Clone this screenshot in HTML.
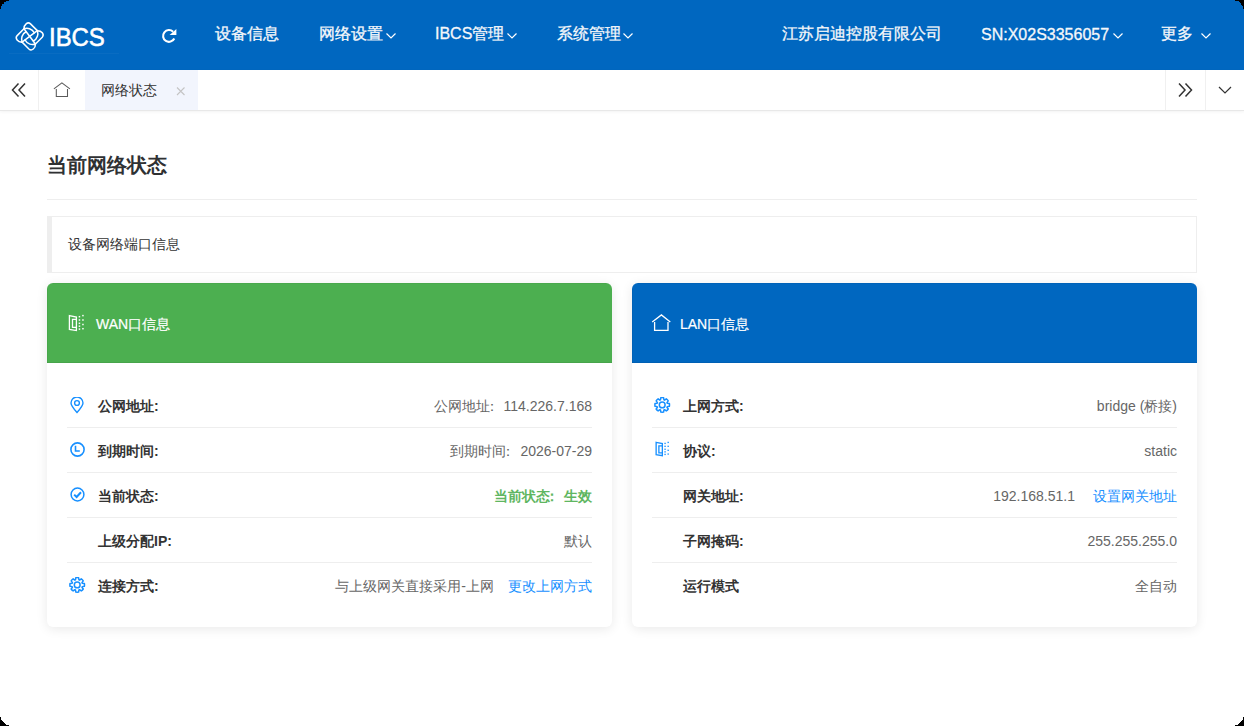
<!DOCTYPE html>
<html><head><meta charset="utf-8">
<style>
*{box-sizing:border-box;margin:0;padding:0}
html,body{width:1244px;height:726px;overflow:hidden;background:#000}
body{font-family:"Liberation Sans",sans-serif;color:#333}
#app{position:absolute;left:0;top:0;width:1244px;height:726px;background:#fff;overflow:hidden}
.abs{position:absolute;white-space:nowrap}
#hdr{position:absolute;left:0;top:0;width:1244px;height:70px;background:#0067c0;color:#fff}
.nav{font-size:16px;line-height:20px;color:#f5f7fa;-webkit-text-stroke:0.3px #f5f7fa}
.chev{position:absolute;width:10px;height:6px}
#tabs{position:absolute;left:0;top:70px;width:1244px;height:41px;background:#fff;border-bottom:1px solid #e8e8e8;box-shadow:0 1px 3px rgba(0,0,0,.05)}
.tdiv{position:absolute;top:0;width:1px;height:40px;background:#f0f0f0}
.title{font-size:20px;line-height:24px;font-weight:bold;color:#2f3133}
.hr{position:absolute;left:47px;top:199px;width:1150px;height:1px;background:#eee}
.info{position:absolute;left:47px;top:216px;width:1150px;height:57px;border:1px solid #eee;border-left:5px solid #eee;background:#fff}
.card{position:absolute;top:283px;width:565px;height:344px;background:#fff;border-radius:6px;overflow:hidden;box-shadow:0 2px 12px rgba(0,0,0,.09)}
.chd{position:absolute;left:0;top:0;width:565px;height:80px;box-shadow:inset 1px 1px 0 rgba(0,0,0,.04),inset 0 -1px 0 rgba(0,0,0,.06)}
.ctitle{font-size:14px;line-height:20px;color:#fff;-webkit-text-stroke:0.2px #fff}
.row{position:absolute;left:20px;width:525px;height:45px;border-bottom:1px solid #eee}
.row.last{border-bottom:none}
.lbl{position:absolute;left:31px;top:13px;font-size:14px;line-height:20px;font-weight:bold;color:#333}
.val{position:absolute;right:0;top:13px;font-size:14px;line-height:20px;color:#666}
.ico{position:absolute;left:3px;top:14px}
.lnk{color:#1890ff}
.ok{color:#5fb661;font-weight:bold}
</style></head><body>
<div id="app">
 <div id="hdr">
  <!-- logo -->
  <svg class="abs" style="left:0;top:0" width="60" height="70" viewBox="0 0 60 70" fill="none" stroke="#fff" stroke-width="1.5" stroke-linecap="round" stroke-linejoin="round">
   <defs><path id="lobe" d="M-5.75 -7.6 C-5.9 -11.8 -2 -15.1 0.8 -12.55 L7.6 -5.75 M-5.75 -7.6 C-2.5 -8.8 2.5 -8 4.6 -3.6"/></defs>
   <g transform="translate(29.7 36.4)">
    <use href="#lobe"/><use href="#lobe" transform="rotate(90)"/><use href="#lobe" transform="rotate(180)"/><use href="#lobe" transform="rotate(270)"/>
    <path d="M-5.75 -7.6 L5.75 7.6 M7.6 -5.75 L-7.6 5.75"/>
   </g>
  </svg>
  <div class="abs" style="left:49px;top:22px;font-size:26px;line-height:30px;color:#fff;-webkit-text-stroke:0.6px #fff;transform:scaleX(0.92);transform-origin:0 0">IBCS</div>
  <div class="abs" style="left:9px;top:53px;width:110px;height:1px;background:rgba(255,255,255,.035)"></div>
  <!-- refresh -->
  <svg class="abs" style="left:156px;top:24px" width="26" height="24" viewBox="0 0 26 24" fill="none" stroke="#fff" stroke-width="2.1">
   <path d="M18.3 14.5 A5.9 5.9 0 1 1 17.1 7.7"/>
   <path d="M13.6 11 L20.4 11 L20.4 5.1 Z" fill="#fff" stroke="none"/>
  </svg>
  <div class="abs nav" style="left:215px;top:24px">设备信息</div>
  <div class="abs nav" style="left:319px;top:24px">网络设置</div>
  <div class="abs nav" style="left:435px;top:24px">IBCS管理</div>
  <div class="abs nav" style="left:557px;top:24px">系统管理</div>
  <div class="abs nav" style="left:782px;top:24px">江苏启迪控股有限公司</div>
  <div class="abs nav" style="left:981px;top:25px">SN:X02S3356057</div>
  <div class="abs nav" style="left:1161px;top:24px">更多</div>
  <svg class="chev" style="left:386px;top:33px" viewBox="0 0 10 6" fill="none" stroke="#fff" stroke-width="1.2"><path d="M0.5 0.5 L5 5 L9.5 0.5"/></svg>
  <svg class="chev" style="left:507px;top:33px" viewBox="0 0 10 6" fill="none" stroke="#fff" stroke-width="1.2"><path d="M0.5 0.5 L5 5 L9.5 0.5"/></svg>
  <svg class="chev" style="left:623px;top:33px" viewBox="0 0 10 6" fill="none" stroke="#fff" stroke-width="1.2"><path d="M0.5 0.5 L5 5 L9.5 0.5"/></svg>
  <svg class="chev" style="left:1113px;top:33px" viewBox="0 0 10 6" fill="none" stroke="#fff" stroke-width="1.2"><path d="M0.5 0.5 L5 5 L9.5 0.5"/></svg>
  <svg class="chev" style="left:1201px;top:33px" viewBox="0 0 10 6" fill="none" stroke="#fff" stroke-width="1.2"><path d="M0.5 0.5 L5 5 L9.5 0.5"/></svg>
 </div>

 <div id="tabs">
  <svg class="abs" style="left:11px;top:12px" width="16" height="16" viewBox="0 0 16 16" fill="none" stroke="#333" stroke-width="1.5">
   <path d="M7.5 1.5 L1.5 8 L7.5 14.5 M14 1.5 L8 8 L14 14.5"/>
  </svg>
  <div class="tdiv" style="left:38px"></div>
  <svg class="abs" style="left:53px;top:12px" width="18" height="16" viewBox="0 0 18 16" fill="none" stroke="#5a5a5a" stroke-width="1.05">
   <path d="M0.9 6.9 L8.9 0.9 L16.9 6.9 M3.3 6.9 V14.4 H14.5 V6.9"/>
  </svg>
  <div class="abs" style="left:85px;top:0;width:113px;height:40px;background:#f2f5fd"></div>
  <div class="abs" style="left:101px;top:10px;font-size:14px;line-height:20px;color:#333">网络状态</div>
    <svg class="abs" style="left:176px;top:16px" width="10" height="10" viewBox="0 0 10 10" fill="none" stroke="#c4c4c4" stroke-width="1.1"><path d="M1 1.5 L8.5 9 M8.5 1.5 L1 9"/></svg>
  <div class="tdiv" style="left:1165px"></div>
  <div class="tdiv" style="left:1205px"></div>
  <svg class="abs" style="left:1177px;top:12px" width="16" height="16" viewBox="0 0 16 16" fill="none" stroke="#333" stroke-width="1.5">
   <path d="M2 1.5 L8 8 L2 14.5 M8.5 1.5 L14.5 8 L8.5 14.5"/>
  </svg>
  <svg class="abs" style="left:1218px;top:16px" width="14" height="8" viewBox="0 0 14 8" fill="none" stroke="#333" stroke-width="1.2">
   <path d="M1 1 L7 7 L13 1"/>
  </svg>
 </div>

 <div class="abs title" style="left:47px;top:153px">当前网络状态</div>
 <div class="hr"></div>
 <div class="info"><div class="abs" style="left:16px;top:17px;font-size:14px;line-height:20px;color:#333">设备网络端口信息</div></div>

 <!-- WAN card -->
 <div class="card" style="left:47px">
  <div class="chd" style="background:#4caf50">
<svg class="abs" style="left:20px;top:31px" width="18" height="18" viewBox="0 0 18 18" fill="none" stroke="#fff" stroke-width="1.3">
    <path d="M2.4 1.6 L9.4 3 V16.6 L2.4 15.4 Z M9.4 5.4 H5.5 V13.4 H9.4"/>
    <g fill="#fff" stroke="none"><rect x="11.7" y="1.9500000000000002" width="1.5" height="1.5"/><rect x="11.7" y="5.25" width="1.5" height="1.5"/><rect x="11.7" y="8.55" width="1.5" height="1.5"/><rect x="11.7" y="11.45" width="1.5" height="1.5"/><rect x="11.7" y="14.35" width="1.5" height="1.5"/><rect x="15.2" y="0.8500000000000001" width="1.5" height="1.5"/><rect x="15.2" y="5.25" width="1.5" height="1.5"/><rect x="15.2" y="9.75" width="1.5" height="1.5"/><rect x="15.2" y="13.95" width="1.5" height="1.5"/></g>
   </svg>
   <div class="abs ctitle" style="left:49px;top:31px">WAN口信息</div>
  </div>
  <div class="row" style="top:100px">
   <svg class="ico" width="16" height="17" viewBox="0 0 16 17" fill="none" stroke="#1890ff" stroke-width="1.4"><path d="M7 15.5 C3 11 1 8.5 1 6 A6 6 0 0 1 13 6 C13 8.5 11 11 7 15.5 Z"/><circle cx="7" cy="6" r="2.4"/></svg>
   <div class="lbl">公网地址:</div><div class="val">公网地址<span style="position:relative;left:-5px">：</span>114.226.7.168</div>
  </div>
  <div class="row" style="top:145px">
   <svg class="ico" width="17" height="17" viewBox="0 0 17 17" fill="none" stroke="#1890ff" stroke-width="1.6"><circle cx="7.5" cy="7.5" r="6.6"/><path d="M5.5 3.8 V9 H9.8"/></svg>
   <div class="lbl">到期时间:</div><div class="val">到期时间<span style="position:relative;left:-5px">：</span>2026-07-29</div>
  </div>
  <div class="row" style="top:190px">
   <svg class="ico" width="17" height="17" viewBox="0 0 17 17" fill="none" stroke="#1890ff" stroke-width="1.5"><circle cx="7.5" cy="7.5" r="6.4"/><path d="M4.2 7.6 L6.6 10 L11 5.2" stroke-width="2"/></svg>
   <div class="lbl">当前状态:</div><div class="val ok">当前状态<span style="position:relative;left:-5px">：</span>生效</div>
  </div>
  <div class="row" style="top:235px">
   <div class="lbl">上级分配IP:</div><div class="val">默认</div>
  </div>
  <div class="row last" style="top:280px">
   <svg class="ico" style="left:2px" width="17" height="17" viewBox="0 0 17 17" fill="none" stroke="#1890ff" stroke-width="1.5" stroke-linejoin="round"><path id="gear" d="M6.47 2.89 L6.81 0.73 A7.3 7.3 0 0 1 9.59 0.73 L9.93 2.89 A5.3 5.3 0 0 1 10.52 3.14 L12.28 1.85 A7.3 7.3 0 0 1 14.25 3.82 L12.96 5.58 A5.3 5.3 0 0 1 13.21 6.17 L15.37 6.51 A7.3 7.3 0 0 1 15.37 9.29 L13.21 9.63 A5.3 5.3 0 0 1 12.96 10.22 L14.25 11.98 A7.3 7.3 0 0 1 12.28 13.95 L10.52 12.66 A5.3 5.3 0 0 1 9.93 12.91 L9.59 15.07 A7.3 7.3 0 0 1 6.81 15.07 L6.47 12.91 A5.3 5.3 0 0 1 5.88 12.66 L4.12 13.95 A7.3 7.3 0 0 1 2.15 11.98 L3.44 10.22 A5.3 5.3 0 0 1 3.19 9.63 L1.03 9.29 A7.3 7.3 0 0 1 1.03 6.51 L3.19 6.17 A5.3 5.3 0 0 1 3.44 5.58 L2.15 3.82 A7.3 7.3 0 0 1 4.12 1.85 L5.88 3.14 A5.3 5.3 0 0 1 6.47 2.89 Z"/><circle cx="8.2" cy="7.9" r="2.9"/></svg>
   <div class="lbl">连接方式:</div><div class="val">与上级网关直接采用-上网<span style="display:inline-block;width:14px"></span><span class="lnk">更改上网方式</span></div>
  </div>
 </div>

 <!-- LAN card -->
 <div class="card" style="left:632px">
  <div class="chd" style="background:#0067c0">
   <svg class="abs" style="left:19px;top:31px" width="20" height="18" viewBox="0 0 20 18" fill="none" stroke="#fff" stroke-width="1.3">
    <path d="M1.2 7.9 L10.4 0.9 L19.3 7.9"/>
    <path d="M3.6 8 V16.3 H17 V8"/>
   </svg>
   <div class="abs ctitle" style="left:48px;top:31px">LAN口信息</div>
  </div>
  <div class="row" style="top:100px">
   <svg class="ico" style="left:2px" width="17" height="17" viewBox="0 0 17 17" fill="none" stroke="#1890ff" stroke-width="1.5" stroke-linejoin="round"><use href="#gear"/><circle cx="8.2" cy="7.9" r="2.9"/></svg>
   <div class="lbl">上网方式:</div><div class="val">bridge (桥接)</div>
  </div>
  <div class="row" style="top:145px">
<svg class="ico" style="left:1.5px;top:13px" width="16" height="16" viewBox="0 0 18 18" fill="none" stroke="#1890ff" stroke-width="1.5">
    <path d="M2.4 1.6 L9.4 3 V16.6 L2.4 15.4 Z M9.4 5.4 H5.5 V13.4 H9.4"/>
    <g fill="#1890ff" stroke="none"><rect x="11.7" y="1.9500000000000002" width="1.5" height="1.5"/><rect x="11.7" y="5.25" width="1.5" height="1.5"/><rect x="11.7" y="8.55" width="1.5" height="1.5"/><rect x="11.7" y="11.45" width="1.5" height="1.5"/><rect x="11.7" y="14.35" width="1.5" height="1.5"/><rect x="15.2" y="0.8500000000000001" width="1.5" height="1.5"/><rect x="15.2" y="5.25" width="1.5" height="1.5"/><rect x="15.2" y="9.75" width="1.5" height="1.5"/><rect x="15.2" y="13.95" width="1.5" height="1.5"/></g>
   </svg>
   <div class="lbl">协议:</div><div class="val">static</div>
  </div>
  <div class="row" style="top:190px">
   <div class="lbl">网关地址:</div><div class="val">192.168.51.1<span style="display:inline-block;width:18px"></span><span class="lnk">设置网关地址</span></div>
  </div>
  <div class="row" style="top:235px">
   <div class="lbl">子网掩码:</div><div class="val">255.255.255.0</div>
  </div>
  <div class="row last" style="top:280px">
   <div class="lbl">运行模式</div><div class="val">全自动</div>
  </div>
 </div>
</div>
<svg style="position:absolute;left:0;top:0;z-index:10" width="1244" height="726" viewBox="0 0 1244 726" shape-rendering="crispEdges"><path d="M0 0h9v1h-9zM0 1h6v1h-6zM0 2h4v1h-4zM0 3h4v1h-4zM0 4h2v1h-2zM0 5h2v1h-2zM0 6h1v1h-1zM0 7h1v1h-1zM0 8h1v1h-1zM1235 0h9v1h-9zM1239 1h5v1h-5zM1240 2h4v1h-4zM1241 3h3v1h-3zM1241 4h3v1h-3zM1242 5h2v1h-2zM1243 6h1v1h-1zM1243 7h1v1h-1zM1243 8h1v1h-1zM0 725h9v1h-9zM0 724h6v1h-6zM0 723h5v1h-5zM0 722h4v1h-4zM0 721h3v1h-3zM0 720h2v1h-2zM0 719h1v1h-1zM0 718h1v1h-1zM0 717h1v1h-1zM1235 725h9v1h-9zM1238 724h6v1h-6zM1239 723h5v1h-5zM1240 722h4v1h-4zM1241 721h3v1h-3zM1242 720h2v1h-2zM1243 719h1v1h-1zM1243 718h1v1h-1zM1243 717h1v1h-1z" fill="#000"/></svg>
</body></html>
